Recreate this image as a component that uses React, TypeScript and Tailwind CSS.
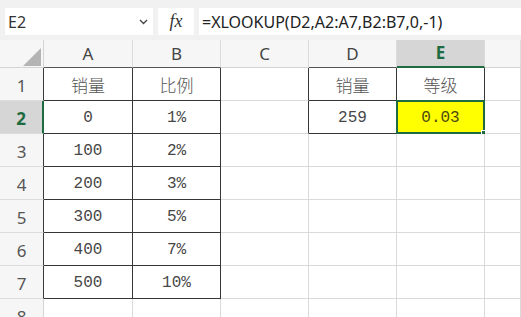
import React from 'react';

const COLS = ['A', 'B', 'C', 'D', 'E', 'F'];

const DATA: Record<string, string> = {
  A1: '销量', B1: '比例',
  A2: '0', B2: '1%',
  A3: '100', B3: '2%',
  A4: '200', B4: '3%',
  A5: '300', B5: '5%',
  A6: '400', B6: '7%',
  A7: '500', B7: '10%',
  D1: '销量', E1: '等级',
  D2: '259', E2: '0.03',
};

// cells with the dark table borders
const inTable = (r: number, c: number) =>
  (c >= 0 && c <= 1 && r >= 1 && r <= 7) || ((c === 3 || c === 4) && r >= 1 && r <= 2);

const isCjk = (s: string) => /[\u4e00-\u9fff]/.test(s);

const ColHeader = ({ c }: { c: number }) => {
  const selected = c === 4;
  const darkB = inTable(1, c);
  return (
    <div
      className={`flex items-center justify-center border-r border-r-[#dcdcdc] ${
        selected
          ? 'bg-[#d6d6d6] border-b-2 border-b-[#1e6b41] font-bold text-[#1e6b41]'
          : darkB
          ? 'bg-[#f6f6f6] border-b border-b-[#555555] text-[#444]'
          : 'bg-[#f6f6f6] border-b border-b-[#d4d4d4] text-[#444]'
      } text-[17px]`}
    >
      {/* the F column is wider, its letter is off screen */}
      {c < 5 ? COLS[c] : ''}
    </div>
  );
};

const RowHeader = ({ r }: { r: number }) => {
  const selected = r === 2;
  const darkR = inTable(r, 0);
  return (
    <div
      className={`flex items-end justify-center pb-[2px] border-b border-b-[#dcdcdc] text-[17px] ${
        selected
          ? 'bg-[#d6d6d6] border-r-2 border-r-[#1e6b41] font-bold text-[#1e6b41]'
          : darkR
          ? 'bg-[#f6f6f6] border-r border-r-[#3a3a3a] text-[#555]'
          : 'bg-[#f6f6f6] border-r border-r-[#d4d4d4] text-[#555]'
      }`}
    >
      {r}
    </div>
  );
};

const Cell = ({ r, c }: { r: number; c: number }) => {
  const key = `${COLS[c]}${r}`;
  const text = DATA[key];
  const darkR = inTable(r, c) || inTable(r, c + 1);
  const darkB = inTable(r, c) || inTable(r + 1, c);
  const active = key === 'E2';
  return (
    <div
      className={`relative flex items-center justify-center pt-[2px] border-r border-b ${
        darkR ? 'border-r-[#363636]' : 'border-r-[#dadada]'
      } ${darkB ? 'border-b-[#363636]' : 'border-b-[#dadada]'} ${active ? 'bg-[#ffff00]' : 'bg-white'}`}
    >
      {text && (
        <span
          className={
            isCjk(text)
              ? "font-['Noto_Sans_CJK_SC',sans-serif] text-[17px] font-light text-[#555]"
              : active
              ? "font-['Liberation_Mono',monospace] text-[16px] text-[#4a4a10]"
              : "font-['Liberation_Mono',monospace] text-[16px] text-[#474747]"
          }
        >
          {text}
        </span>
      )}
      {active && (
        <>
          <div className="pointer-events-none absolute -left-[1px] -top-[1px] -right-[1px] -bottom-[1px] border-2 border-[#1e6b41]" />
          <div className="absolute -bottom-[4px] -right-[4px] h-[7px] w-[7px] border border-white bg-[#1e6b41]" />
        </>
      )}
    </div>
  );
};

const App = () => {
  const rows = [1, 2, 3, 4, 5, 6, 7, 8];
  return (
    <div className="h-[317px] w-[521px] overflow-hidden bg-white font-['Noto_Sans','Liberation_Sans',sans-serif]">
      {/* formula bar */}
      <div className="flex h-[40px] items-start gap-[5px] bg-[#f1f1f1] pl-[5px] pt-[8px]">
        <div className="flex h-[27px] w-[148px] items-center justify-between bg-white pl-[3px] pr-[4px] text-[16px] text-[#333]">
          <span>E2</span>
          <svg width="9" height="6" viewBox="0 0 9 6" className="mr-[1px]">
            <path d="M1 1l3.5 3.5L8 1" fill="none" stroke="#444" strokeWidth="1.3" />
          </svg>
        </div>
        <div className="flex h-[27px] w-[36px] items-center justify-center bg-white font-['Liberation_Serif',serif] text-[18px] italic text-[#333]">
          fx
        </div>
        <div className="flex h-[27px] flex-1 items-center bg-white pl-[3px] text-[16px] text-[#222]">
          =XLOOKUP(D2,A2:A7,B2:B7,0,-1)
        </div>
      </div>

      {/* sheet */}
      <div className="grid grid-cols-[44px_89px_88px_88px_88px_88px_1fr] grid-rows-[28px_33px_33px_33px_33px_33px_33px_33px_33px]">
        <div className="flex items-end justify-end border-b border-r border-b-[#d4d4d4] border-r-[#d4d4d4] bg-[#f6f6f6] pb-[1px] pr-[2px]">
          <svg width="18" height="18" viewBox="0 0 18 18">
            <path d="M18 0V18H0Z" fill="#b4b4b4" />
          </svg>
        </div>
        {COLS.map((_, c) => (
          <ColHeader key={c} c={c} />
        ))}
        {rows.map((r) => (
          <React.Fragment key={r}>
            <RowHeader r={r} />
            {COLS.map((_, c) => (
              <Cell key={c} r={r} c={c} />
            ))}
          </React.Fragment>
        ))}
      </div>
    </div>
  );
};

export default App;
